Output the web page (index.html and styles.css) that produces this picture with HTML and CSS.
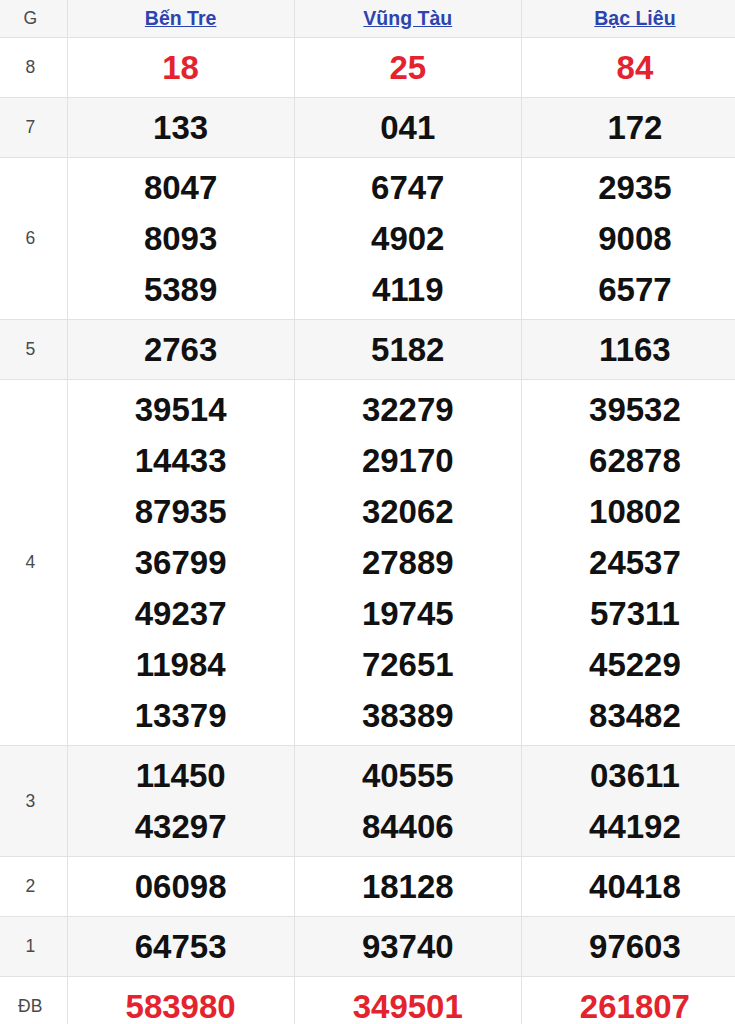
FILE: index.html
```html
<!DOCTYPE html>
<html lang="vi">
<head>
<meta charset="utf-8">
<title>Kết quả xổ số</title>
<link rel="stylesheet" href="styles.css">
</head>
<body>
<table class="kq">
  <colgroup>
    <col class="c-g"><col class="c-p"><col class="c-p"><col class="c-p">
  </colgroup>
  <thead>
    <tr class="head">
      <th class="lbl">G</th>
      <th><a href="#">Bến Tre</a></th>
      <th><a href="#">Vũng Tàu</a></th>
      <th><a href="#">Bạc Liêu</a></th>
    </tr>
  </thead>
  <tbody>
    <tr>
      <td class="lbl">8</td>
      <td><div class="n red">18</div></td>
      <td><div class="n red">25</div></td>
      <td><div class="n red">84</div></td>
    </tr>
    <tr class="alt">
      <td class="lbl">7</td>
      <td><div class="n">133</div></td>
      <td><div class="n">041</div></td>
      <td><div class="n">172</div></td>
    </tr>
    <tr>
      <td class="lbl">6</td>
      <td><div class="n">8047</div><div class="n">8093</div><div class="n">5389</div></td>
      <td><div class="n">6747</div><div class="n">4902</div><div class="n">4119</div></td>
      <td><div class="n">2935</div><div class="n">9008</div><div class="n">6577</div></td>
    </tr>
    <tr class="alt">
      <td class="lbl">5</td>
      <td><div class="n">2763</div></td>
      <td><div class="n">5182</div></td>
      <td><div class="n">1163</div></td>
    </tr>
    <tr>
      <td class="lbl">4</td>
      <td><div class="n">39514</div><div class="n">14433</div><div class="n">87935</div><div class="n">36799</div><div class="n">49237</div><div class="n">11984</div><div class="n">13379</div></td>
      <td><div class="n">32279</div><div class="n">29170</div><div class="n">32062</div><div class="n">27889</div><div class="n">19745</div><div class="n">72651</div><div class="n">38389</div></td>
      <td><div class="n">39532</div><div class="n">62878</div><div class="n">10802</div><div class="n">24537</div><div class="n">57311</div><div class="n">45229</div><div class="n">83482</div></td>
    </tr>
    <tr class="alt">
      <td class="lbl">3</td>
      <td><div class="n">11450</div><div class="n">43297</div></td>
      <td><div class="n">40555</div><div class="n">84406</div></td>
      <td><div class="n">03611</div><div class="n">44192</div></td>
    </tr>
    <tr>
      <td class="lbl">2</td>
      <td><div class="n">06098</div></td>
      <td><div class="n">18128</div></td>
      <td><div class="n">40418</div></td>
    </tr>
    <tr class="alt">
      <td class="lbl">1</td>
      <td><div class="n">64753</div></td>
      <td><div class="n">93740</div></td>
      <td><div class="n">97603</div></td>
    </tr>
    <tr>
      <td class="lbl">ĐB</td>
      <td><div class="n red">583980</div></td>
      <td><div class="n red">349501</div></td>
      <td><div class="n red">261807</div></td>
    </tr>
  </tbody>
</table>
</body>
</html>
```

FILE: styles.css
```css
html, body {
  margin: 0;
  padding: 0;
  background: #ffffff;
  overflow: hidden;
}
body {
  width: 735px;
  font-family: "Liberation Sans", Arial, sans-serif;
}
.kq {
  width: 755px;
  margin-left: -6px;
  border-collapse: collapse;
  table-layout: fixed;
}
.c-g { width: 73px; }
.c-p { width: 227px; }
.kq th, .kq td {
  border: 1px solid #e2e2e2;
  text-align: center;
  vertical-align: middle;
  padding: 4px 0;
}
.kq tr:first-child th { border-top: none; }
.kq th:first-child, .kq td:first-child { border-left: none; }
.head th {
  background: #f6f6f6;
  height: 37px;
  padding: 0;
}
.head a {
  color: #2c44b0;
  font-weight: bold;
  font-size: 19.5px;
  text-decoration: underline;
}
.lbl {
  color: #4a4a4a;
  font-size: 17.5px;
  font-weight: normal;
}
.head th.lbl {
  color: #4a4a4a;
  font-weight: normal;
  font-size: 17.5px;
}
.alt td { background: #f6f6f6; }
.n {
  font-size: 33px;
  line-height: 51px;
  font-weight: bold;
  color: #111111;
}
.n.red { color: #e3242f; }
```
